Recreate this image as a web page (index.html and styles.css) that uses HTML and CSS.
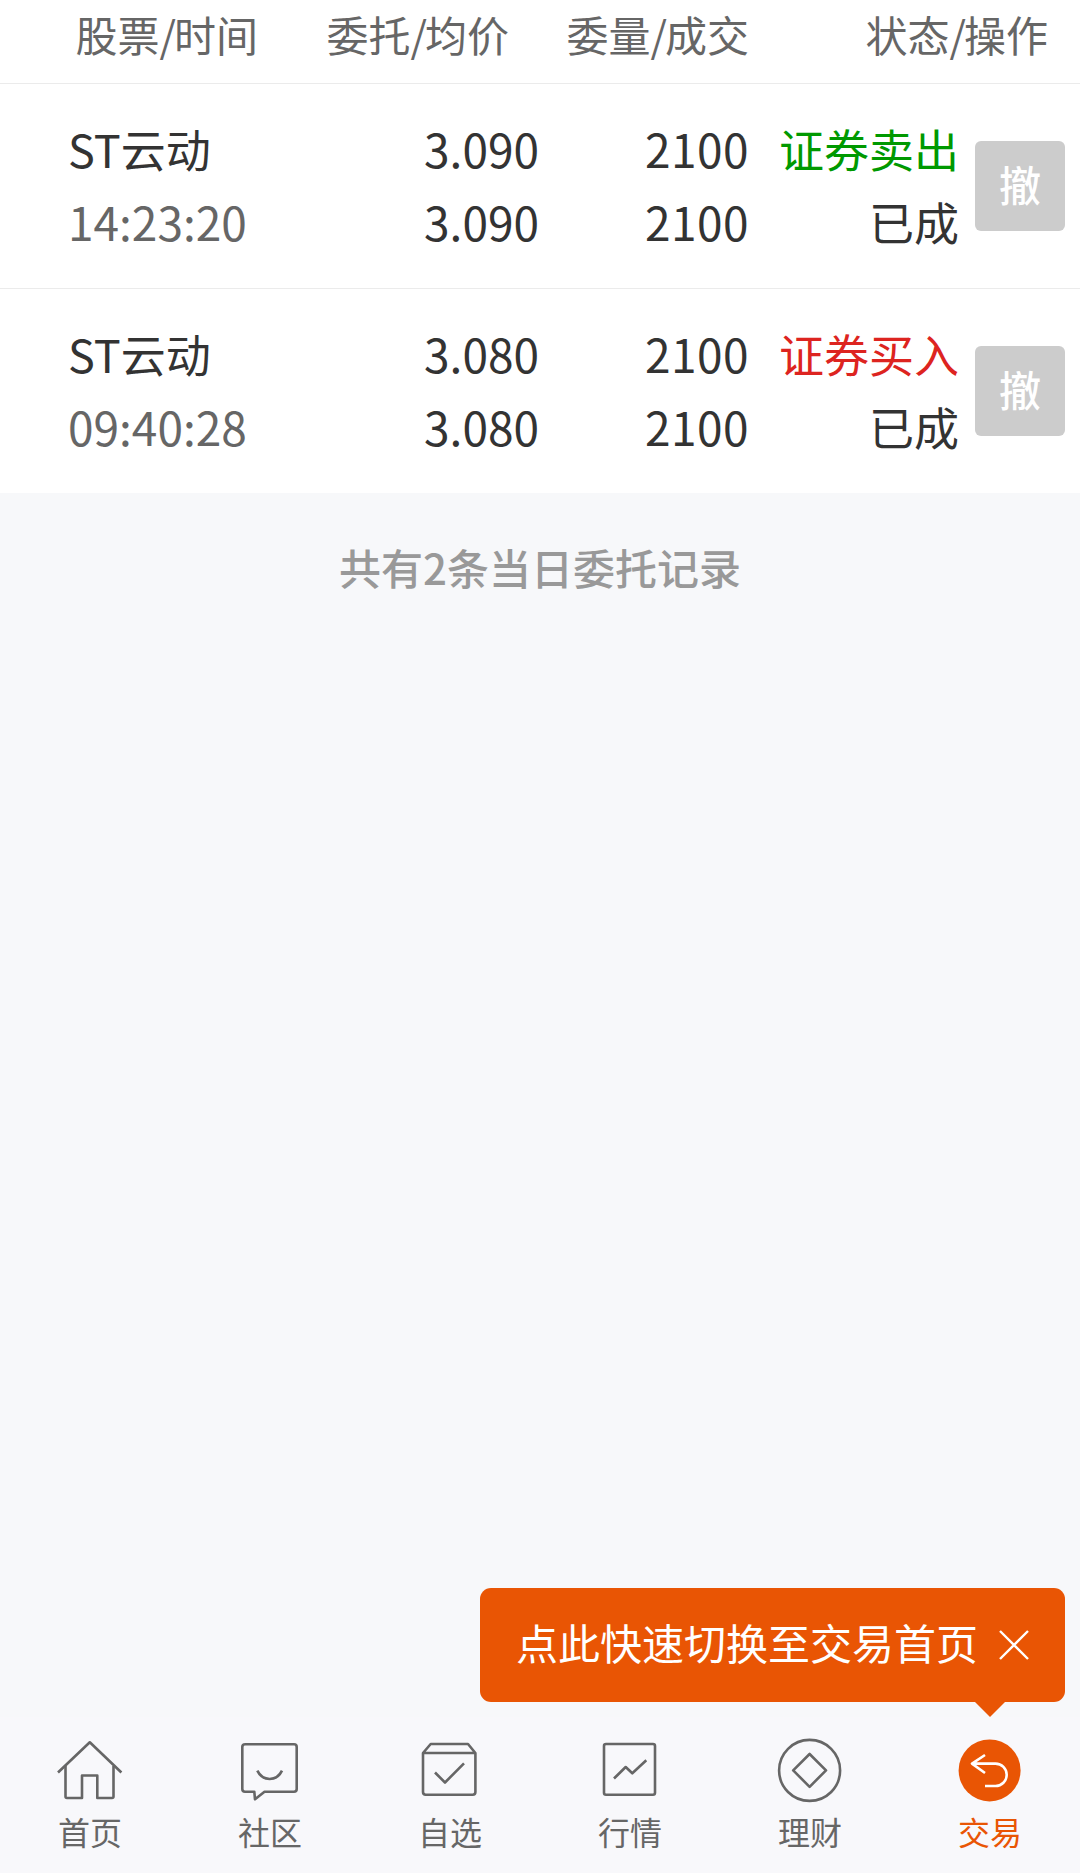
FILE: index.html
```html
<!DOCTYPE html>
<html lang="zh-CN">
<head>
    <title>当日委托</title>
    <meta charset="UTF-8">
    <meta name="viewport" content="width=device-width, initial-scale=1.0">
    <link rel="stylesheet" href="styles.css">
</head>
<body>
    <div class="page">
        <div class="orders">
            <div class="orders-head">
                <span class="col-stock">股票<i>/</i>时间</span>
                <span class="col-price">委托<i>/</i>均价</span>
                <span class="col-amount">委量<i>/</i>成交</span>
                <span class="col-status">状态<i>/</i>操作</span>
            </div>

            <div class="order">
                <div class="cell stock">
                    <p>ST云动</p>
                    <p class="num time">14:23:20</p>
                </div>
                <div class="cell num price">
                    <p>3.090</p>
                    <p>3.090</p>
                </div>
                <div class="cell num amount">
                    <p>2100</p>
                    <p>2100</p>
                </div>
                <div class="cell status">
                    <p class="sell">证券卖出</p>
                    <p>已成</p>
                </div>
                <button class="cancel" type="button">撤</button>
            </div>

            <div class="order">
                <div class="cell stock">
                    <p>ST云动</p>
                    <p class="num time">09:40:28</p>
                </div>
                <div class="cell num price">
                    <p>3.080</p>
                    <p>3.080</p>
                </div>
                <div class="cell num amount">
                    <p>2100</p>
                    <p>2100</p>
                </div>
                <div class="cell status">
                    <p class="buy">证券买入</p>
                    <p>已成</p>
                </div>
                <button class="cancel" type="button">撤</button>
            </div>
        </div>

        <p class="summary">共有2条当日委托记录</p>

        <nav class="tabbar">
            <div class="tip">
                <span>点此快速切换至交易首页</span>
                <svg class="tip-close" viewBox="0 0 30 30">
                    <path d="M1 1L29 29M29 1L1 29"/>
                </svg>
            </div>

            <a class="tab">
                <svg viewBox="0 0 66 66">
                    <path d="M1 34.5L32.8 4.3L64.4 34.5"/>
                    <path d="M8.5 28V58.5Q8.5 60 10 60H25V37.5H40.3V60H55Q56.5 60 56.5 58.5V28"/>
                </svg>
                <span>首页</span>
            </a>
            <a class="tab">
                <svg viewBox="0 0 66 66">
                    <path d="M8.3 6.3H57Q59.7 6.3 59.7 9V51Q59.7 53.7 57 53.7H27.5L18 61.3L17.3 53.7H8Q5.3 53.7 5.3 51V9Q5.3 6.3 8.3 6.3Z"/>
                    <path d="M20.3 32.7Q24.5 41 32.7 41T45 32.7"/>
                </svg>
                <span>社区</span>
            </a>
            <a class="tab">
                <svg viewBox="0 0 66 66">
                    <path d="M6 15L13.7 6H51L58.4 15V54Q58.4 56.7 55.7 56.7H8.7Q6 56.7 6 54ZM6 15H58.4"/>
                    <path d="M18 34.5L28 44.5L47 25.3"/>
                </svg>
                <span>自选</span>
            </a>
            <a class="tab">
                <svg viewBox="0 0 66 66">
                    <rect x="7" y="6" width="51" height="50.7" rx="2"/>
                    <path d="M17 40.5L28.7 29L35.3 35.3L49.3 22.3"/>
                </svg>
                <span>行情</span>
            </a>
            <a class="tab">
                <svg viewBox="0 0 66 66">
                    <circle cx="32.6" cy="32.4" r="30.5"/>
                    <path d="M32.6 16L49 32.4L32.6 48.8L16.2 32.4Z"/>
                </svg>
                <span>理财</span>
            </a>
            <a class="tab active">
                <svg viewBox="0 0 66 66">
                    <circle cx="32.6" cy="32.4" r="31"/>
                    <path d="M28 17L15 25.6L28 35M15 25.6H38.5A11.2 11.2 0 0 1 38.5 48H28"/>
                </svg>
                <span>交易</span>
            </a>
        </nav>
    </div>
</body>
</html>
```
FILE: styles.css
```css
* {
    margin: 0;
    padding: 0;
    box-sizing: border-box;
    font-family: 'Noto Sans CJK SC', sans-serif;
}

body {
    background: #f7f8fa;
    color: #333;
}

.page {
    display: flex;
    flex-direction: column;
    height: 1873px;
    overflow: hidden;
}

.orders {
    background: #fff;
}

.orders-head {
    display: grid;
    grid-template-columns: 258px 251px 240px 299px;
    height: 84px;
    border-bottom: 1px solid #ebebeb;
    color: #666;
    font-size: 42px;
    line-height: 68px;
    text-align: right;
    white-space: nowrap;
}

.orders-head i {
    font-style: normal;
    letter-spacing: -2px;
}

.order {
    display: grid;
    grid-template-columns: 260px 211px 210px 210px 90px;
    align-items: center;
    height: 205px;
    padding-left: 68px;
    border-bottom: 1px solid #ebebeb;
    font-size: 45px;
    line-height: 73px;
    white-space: nowrap;
}

.order:last-child {
    height: 204px;
    border-bottom: none;
}

.cell {
    padding-bottom: 2px;
}

.price,
.amount,
.status {
    text-align: right;
}

.num {
    font-size: 46px;
}

.amount {
    letter-spacing: 0.5px;
}

.time {
    color: #666;
}

.sell {
    color: #090;
}

.buy {
    color: #dd2420;
}

.cancel {
    width: 90px;
    height: 90px;
    margin-left: 16px;
    padding-bottom: 4px;
    border: none;
    border-radius: 6px;
    background: #ccc;
    color: #fff;
    font-size: 42px;
    font-weight: 500;
    line-height: 86px;
}

.summary {
    margin-top: 44px;
    color: #999;
    font-size: 42px;
    font-weight: 500;
    line-height: 60px;
    text-align: center;
}

.tabbar {
    position: relative;
    display: grid;
    grid-template-columns: repeat(6, 1fr);
    height: 156px;
    margin-top: auto;
    padding-top: 21px;
    background: #f8f8fb;
}

.tab {
    display: flex;
    flex-direction: column;
    align-items: center;
    color: #666;
    font-size: 32px;
    line-height: 46px;
}

.tab svg {
    width: 66px;
    height: 66px;
    margin-bottom: 4px;
    fill: none;
    stroke: #666;
    stroke-width: 2.6;
    stroke-linejoin: round;
}

.tab.active {
    color: #e95504;
}

.tab.active circle {
    fill: #e95504;
    stroke: none;
}

.tab.active path {
    stroke: #fff;
}

/* bubble above the last tab */
.tip {
    position: absolute;
    right: 15px;
    bottom: 171px;
    display: flex;
    align-items: center;
    justify-content: space-between;
    width: 585px;
    height: 114px;
    padding: 0 36px;
    border-radius: 11px;
    background: #e95504;
    color: #fff;
    font-size: 42px;
    white-space: nowrap;
}

.tip span {
    padding-bottom: 7px;
}

.tip::after {
    content: '';
    position: absolute;
    top: 100%;
    right: 60px;
    border: 15px solid transparent;
    border-top-color: #e95504;
    border-bottom: none;
}

.tip-close {
    width: 30px;
    height: 30px;
    stroke: #fff;
    stroke-width: 2.4;
}
```
